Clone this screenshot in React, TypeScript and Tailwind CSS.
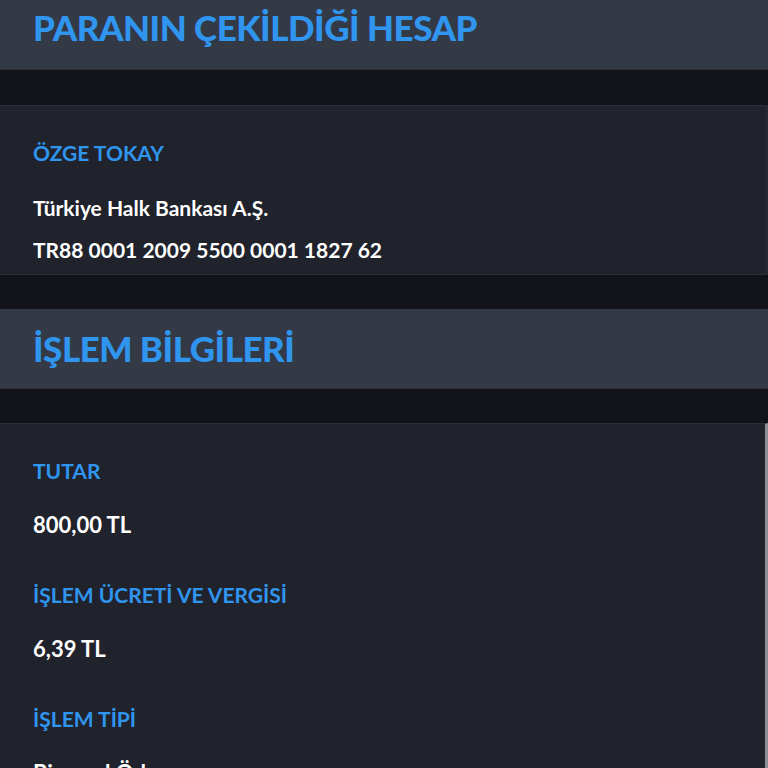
import React from 'react'

const font = { fontFamily: '"Lato", "Noto Sans", sans-serif' }

function SectionHeader({ title, className = '' }: { title: string; className?: string }) {
  return (
    <div className={`bg-[#343946] px-[33px] flex items-center border-b border-[#2a2e39] ${className}`}>
      <h2 className="text-[35px] font-black tracking-[-0.5px] text-[#2f95ee] leading-none">{title}</h2>
    </div>
  )
}

function Field({ label, value }: { label: string; value: string }) {
  return (
    <div className="flex flex-col gap-[33px]">
      <p className="text-[21px] font-bold text-[#2f95ee] leading-none">{label}</p>
      <p className="text-[22px] font-bold text-white leading-none">{value}</p>
    </div>
  )
}

export default function App() {
  return (
    <div className="w-[768px] h-[768px] overflow-hidden bg-[#13131b]" style={font}>
      <SectionHeader title="PARANIN ÇEKİLDİĞİ HESAP" className="h-[70px] pb-[14px]" />

      <div className="h-[35px]" />

      {/* account card */}
      <div className="bg-[#20222c] border-t border-b border-r-[3px] border-t-[#2c2e39] border-b-[#2c2e39] border-r-[#262833] px-[33px] pt-[36px] h-[170px]">
        <p className="text-[21px] font-bold text-[#2f95ee] leading-none">ÖZGE TOKAY</p>
        <p className="mt-[34px] text-[21px] font-bold text-white leading-none">Türkiye Halk Bankası A.Ş.</p>
        <p className="mt-[21px] text-[21px] font-bold text-white leading-none">TR88 0001 2009 5500 0001 1827 62</p>
      </div>

      <div className="h-[34px]" />

      <SectionHeader title="İŞLEM BİLGİLERİ" className="h-[80px]" />

      <div className="h-[34px]" />

      {/* transaction details */}
      <div className="bg-[#20222c] border-t border-t-[#2c2e39] border-r-[3px] border-r-[#8b8d94] px-[33px] pt-[36px] flex flex-col gap-[48px] min-h-[400px]">
        <Field label="TUTAR" value="800,00 TL" />
        <Field label="İŞLEM ÜCRETİ VE VERGİSİ" value="6,39 TL" />
        <Field label="İŞLEM TİPİ" value="Bireysel Ödeme" />
      </div>
    </div>
  )
}
